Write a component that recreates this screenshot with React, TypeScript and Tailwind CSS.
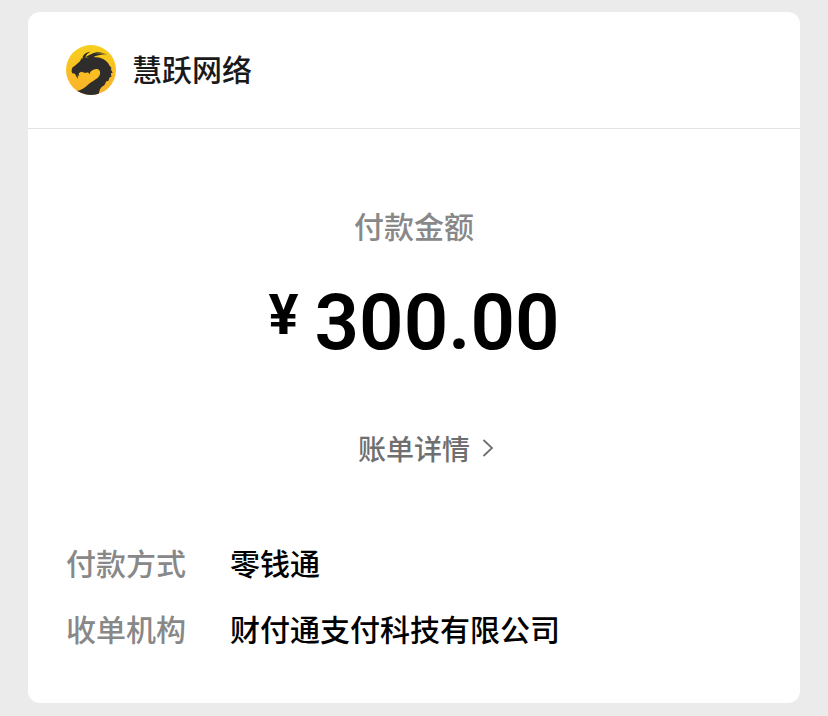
import React from 'react';

interface DetailRow {
  label: string;
  value: string;
}

const details: DetailRow[] = [
  { label: '付款方式', value: '零钱通' },
  { label: '收单机构', value: '财付通支付科技有限公司' },
];

// Round merchant logo: dark dragon head on a yellow disc
const DragonLogo = () => (
  <svg className="size-[50px] shrink-0" viewBox="18 21 150 150" aria-hidden="true">
    <defs>
      <linearGradient id="disc" x1="0" y1="0" x2="0" y2="1">
        <stop offset="0" stopColor="#f6cf1c" />
        <stop offset="1" stopColor="#fbb02a" />
      </linearGradient>
      <clipPath id="round">
        <circle cx="93" cy="96" r="75" />
      </clipPath>
    </defs>
    <circle cx="93" cy="96" r="75" fill="url(#disc)" />
    <g clipPath="url(#round)" fill="#2f2c2c">
      <path d="M60 70 L65 60 L68 64 C66 52 75 43 92 41 C80 47 76 53 77 60 C85 58 90 57 96 57 C122 56 142 66 148 82 L155 91 L152 93 L158 104 L153 106 L154 117 L149 118 L145 129 L139 130 L133 142 C123 147 116 155 117 174 L62 174 L50 159 C64 157 74 149 84 140 C98 128 114 123 119 111 C123 101 118 93 110 93 C103 93 97 97 91 101 L89 109 L84 103 C77 106 70 104 66 101 C61 102 58 104 56 107 L58 115 L53 111 L54 123 L48 114 L45 107 L37 106 C33 100 35 93 38 88 C44 83 51 78 55 74 Z" />
      <path d="M76 58 C89 47 112 42 143 49 C123 49 106 52 96 61 Z" />
      <path d="M92 50 C102 42 117 40 128 43 C116 43 107 47 101 52 Z" />
    </g>
  </svg>
);

const App = () => {
  return (
    <main className="min-h-screen bg-[#ebebeb] px-7 py-3 font-['Noto_Sans_CJK_SC',sans-serif] font-medium">
      <article className="rounded-xl bg-white pb-[52px]">
        <header className="flex items-center gap-4 border-b border-[#e3e3e3] px-[38px] py-[33px]">
          <DragonLogo />
          <h1 className="pb-1 text-[30px] leading-[46px] text-[#191919]">慧跃网络</h1>
        </header>

        <section className="flex flex-col items-center pt-[73px]">
          <h2 className="text-[30px] leading-[46px] text-[#888888]">付款金额</h2>
          <p className="mt-[27px] flex items-start gap-4 font-[Roboto,sans-serif] text-black">
            <span className="text-[56px] leading-[80px] font-bold">¥</span>
            <span className="text-[78px] leading-[96px] font-semibold">300.00</span>
          </p>
          <a href="#bill" className="mt-[54px] flex items-center gap-3 pl-6 text-[28px] leading-[46px] text-[#6f6f6f]">
            账单详情
            <svg className="h-5 w-3" viewBox="0 0 12 20" fill="none" stroke="currentColor" strokeWidth="1.8" aria-hidden="true">
              <path d="M1.5 2 L10 10 L1.5 18" />
            </svg>
          </a>
        </section>

        <dl className="mt-[68px] grid grid-cols-[auto_1fr] gap-x-11 gap-y-5 px-[38px] text-[30px] leading-[46px]">
          {details.map((row) => (
            <React.Fragment key={row.label}>
              <dt className="text-[#888888]">{row.label}</dt>
              <dd className="text-black">{row.value}</dd>
            </React.Fragment>
          ))}
        </dl>
      </article>
    </main>
  );
};

export default App;
